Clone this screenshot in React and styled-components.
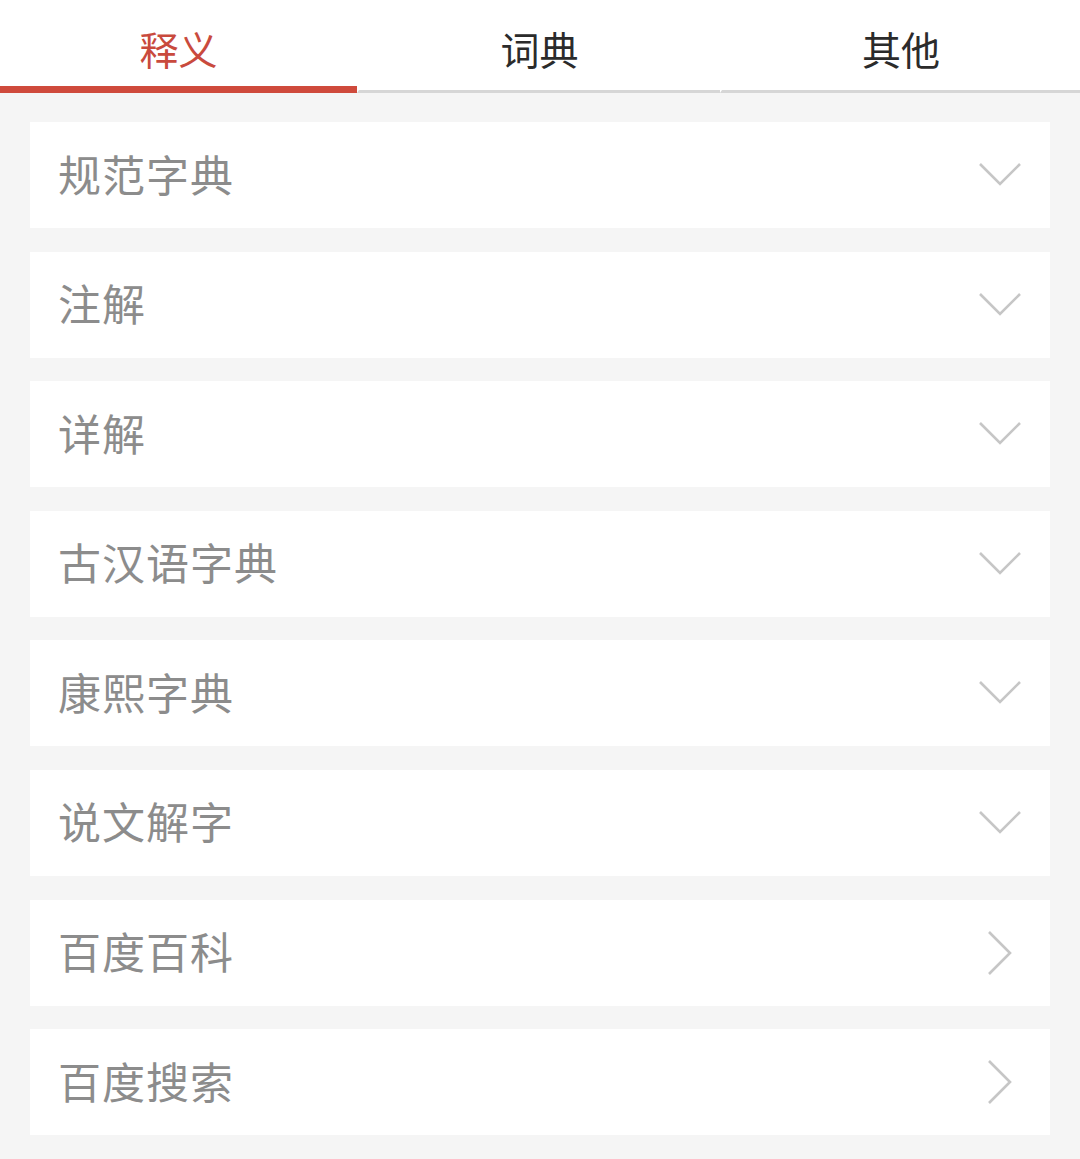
import React from 'react'
import styled, { createGlobalStyle } from 'styled-components'

const GlobalStyle = createGlobalStyle`
  body {
    margin: 0;
    background: #f5f5f5;
    font-family: "Noto Sans CJK SC", "Noto Sans", sans-serif;
  }
`

const tabs = ['释义', '词典', '其他']

const items = [
  { title: '规范字典', kind: 'down' },
  { title: '注解', kind: 'down' },
  { title: '详解', kind: 'down' },
  { title: '古汉语字典', kind: 'down' },
  { title: '康熙字典', kind: 'down' },
  { title: '说文解字', kind: 'down' },
  { title: '百度百科', kind: 'right' },
  { title: '百度搜索', kind: 'right' },
]

const Chevron = ({ kind }) =>
  kind === 'down' ? (
    <svg width="44" height="26" viewBox="0 0 44 26">
      <polyline points="2,2 22,22 42,2" fill="none" stroke="#c6c6c6" strokeWidth="2.6" />
    </svg>
  ) : (
    <svg width="28" height="46" viewBox="0 0 28 46">
      <polyline points="3,2 24,23 3,44" fill="none" stroke="#c6c6c6" strokeWidth="2.6" />
    </svg>
  )

const App = () => {
  return (
    <Page>
      <GlobalStyle />
      <TabBar>
        {tabs.map((t, i) => (
          <Tab key={t} $active={i === 0}>
            {t}
          </Tab>
        ))}
      </TabBar>
      <List>
        {items.map((it) => (
          <Card key={it.title}>
            <Title>{it.title}</Title>
            <IconBox $kind={it.kind}>
              <Chevron kind={it.kind} />
            </IconBox>
          </Card>
        ))}
      </List>
    </Page>
  )
}

const Page = styled.div`
  width: 1080px;
  min-height: 1159px;
  background: #f5f5f5;
`

const TabBar = styled.div`
  display: grid;
  grid-template-columns: 357px 363px 360px;
  background: #ffffff;
  height: 93px;
`

const Tab = styled.div`
  display: flex;
  align-items: center;
  justify-content: center;
  box-sizing: border-box;
  height: 93px;
  padding-top: 9px;
  font-size: 39px;
  color: ${(p) => (p.$active ? '#c94a3d' : '#2b2b2b')};
  border-bottom: ${(p) => (p.$active ? '7px solid #cf4a3c' : '3px solid #d6d6d6')};
  padding-bottom: ${(p) => (p.$active ? '0' : '4px')};
  & + & {
    border-left: 2px solid #ffffff;
  }
`

const List = styled.div`
  display: flex;
  flex-direction: column;
  gap: 23.6px;
  padding: 29px 30px 0;
`

const Card = styled.div`
  display: flex;
  align-items: center;
  justify-content: space-between;
  height: 106px;
  background: #ffffff;
  padding: 0 28px 4px 28px;
  box-sizing: border-box;
`

const Title = styled.span`
  font-size: 43px;
  color: #8c8c8c;
  letter-spacing: 1px;
  line-height: 1;
`

const IconBox = styled.div`
  display: flex;
  align-items: center;
  justify-content: center;
  width: 44px;
  margin-top: ${(p) => (p.$kind === 'down' ? '4px' : '4px')};
`

export default App
